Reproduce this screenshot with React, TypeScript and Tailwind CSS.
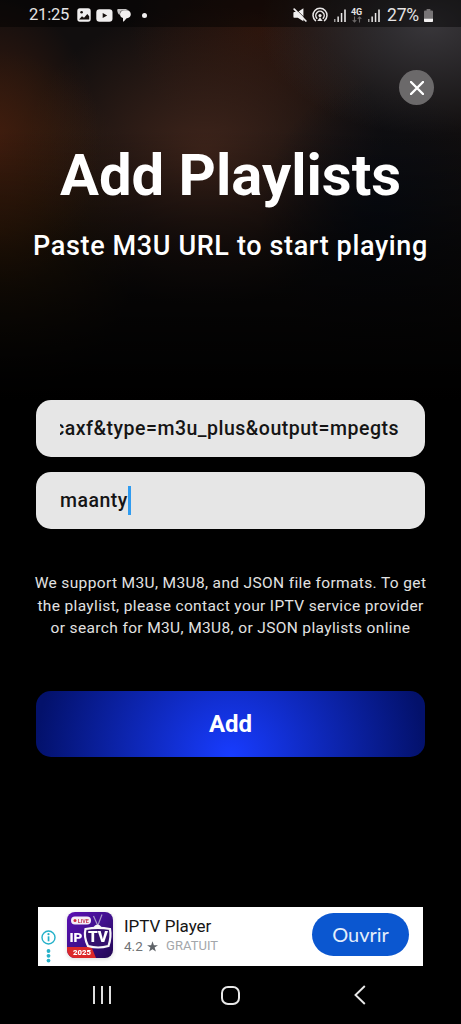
import type { ReactNode } from "react";

function SignalBars() {
  return (
    <svg viewBox="0 0 12 13" className="h-[13px] w-3" fill="#e8e6e6">
      <rect x="0" y="10" width="1.5" height="3" fill="#9a9898" />
      <rect x="3.4" y="7.5" width="1.5" height="5.5" />
      <rect x="6.8" y="4" width="1.5" height="9" />
      <rect x="10.2" y="0.5" width="1.6" height="12.5" />
    </svg>
  );
}

function StatusBar() {
  return (
    <div className="flex h-[27px] items-center bg-black/45 pl-[29px] pr-[28px] pt-[3px] text-[#e6e4e4]">
      <span className="w-[42px] whitespace-nowrap text-[16.5px] leading-6 tracking-[-0.2px]">21:25</span>
      <svg viewBox="0 0 14 14" className="ml-[6px] size-[14px]">
        <rect x="0.3" y="0.3" width="13.4" height="13.4" rx="2.6" fill="#f1efef" />
        <circle cx="4.6" cy="4.2" r="1.3" fill="#17100e" />
        <path d="M2 11.6 5 8.3 7 9.8 10.3 6 12.2 8.3V11.6Z" fill="#17100e" />
      </svg>
      <svg viewBox="0 0 17 13" className="ml-[5px] h-[13px] w-[17px]">
        <rect x="0.3" y="0.3" width="16.2" height="12.4" rx="3.2" fill="#f1efef" />
        <path d="M6.7 3.9 11.2 6.5 6.7 9.1Z" fill="#17100e" />
      </svg>
      <svg viewBox="0 0 14 14" className="ml-[4px] size-[14px]">
        <path d="M1.2 1H7.5C9.5 1 10.5 1.7 11 2.3H6.5C4.2 2.3 2.8 4 2.8 6V7C1.2 6 .5 4.5.2 2.2Q.1 1 1.2 1Z" fill="#c4c2c2" />
        <path d="M7 2.3H9.8C12.3 2.3 13.8 4 13.8 6.3S12.300 10.200 10 10.200H9.600L6.800 13.500Q6 13.800 6 12.900V10.100C4.200 9.600 3 8.200 3 6.300 3 4 4.800 2.300 7 2.300Z" fill="#f1efef" />
      </svg>
      <span className="ml-[11px] size-[5px] rounded-full bg-[#f1efef]" />

      <svg viewBox="0 0 14 14" className="ml-auto size-[14px]">
        <path d="M1.2 4.1H4.8L10.4.3V13.2L4.800 9.800H1.200Q.4 9.800.4 9V4.900Q.4 4.100 1.200 4.100Z" fill="#f1efef" />
        <path d="M2.500.8 13.700 12" stroke="#1a1210" strokeWidth="0.900" />
        <path d="M1.200 1.200 12.900 13" stroke="#f1efef" strokeWidth="1.700" strokeLinecap="round" />
      </svg>
      <svg viewBox="0 0 16 16" className="ml-[5px] size-[16px]" fill="none" stroke="#e8e6e6" strokeWidth="1.500" strokeLinecap="round">
        <path d="M3.500 13.600a7 7 0 1 1 9 0" />
        <path d="M4.800 11.200a4.200 4.200 0 1 1 6.400 0" />
        <circle cx="8" cy="8.600" r="1.600" fill="#e8e6e6" stroke="none" />
        <path d="M8 10.200 10.700 14H5.300Z" fill="#e8e6e6" stroke="none" />
      </svg>
      <div className="ml-[6px]">
        <SignalBars />
      </div>
      <div className="ml-[5px] flex w-[11px] flex-col items-center">
        <span className="text-[9px] font-bold leading-[8px] tracking-[-0.2px]">4G</span>
        <svg viewBox="0 0 10 7" className="h-[7px] w-[10px]" fill="none" stroke="#6d6969" strokeWidth="1.100">
          <path d="M2.500.5V6M.7 4.200 2.500 6l1.800-1.800M7.500 6.500V1M5.700 2.800 7.500 1l1.800 1.800" />
        </svg>
      </div>
      <div className="ml-[6px]">
        <SignalBars />
      </div>
      <span className="ml-[7px] w-[35px] whitespace-nowrap text-[17.5px] leading-6 tracking-[-0.2px]">27%</span>
      <svg viewBox="0 0 9 13" className="ml-[2px] h-[13px] w-[9px]">
        <path d="M2.600 0h3.800v1.500H8q1 0 1 1V12q0 1-1 1H1q-1 0-1-1V2.500q0-1 1-1h1.600Z" fill="#777476" />
        <path d="M0 9.800H9V12q0 1-1 1H1q-1 0-1-1Z" fill="#f4f2f2" />
      </svg>
    </div>
  );
}

function Field({ children }: { children: ReactNode }) {
  return (
    <div className="flex h-[57px] items-center rounded-[15px] bg-[#e6e6e6] px-6 text-[19.5px] font-medium tracking-[0.5px] text-[#151515]">
      {children}
    </div>
  );
}

function AppIcon() {
  return (
    <svg viewBox="0 0 46 46" className="size-[46px] drop-shadow-sm">
      <defs>
        <linearGradient id="purple" x1="0" y1="0" x2="1" y2="1">
          <stop offset="0" stopColor="#5b10b4" />
          <stop offset="0.5" stopColor="#40108e" />
          <stop offset="1" stopColor="#210650" />
        </linearGradient>
        <clipPath id="tile">
          <rect width="46" height="46" rx="8" />
        </clipPath>
      </defs>
      <g clipPath="url(#tile)">
        <rect width="46" height="46" fill="url(#purple)" />
        <path d="M0 35H24.500L29 46H0Z" fill="#dc2829" />
      </g>
      <rect x="4" y="4.500" width="20" height="8" rx="4" fill="#f5eef5" />
      <circle cx="8" cy="8.500" r="1.500" fill="#d52c3d" />
      <text x="10.800" y="10.700" fontSize="6" fontWeight="700" fill="#c7405a" textLength="11" lengthAdjust="spacingAndGlyphs">LIVE</text>
      <path d="M26.500 4 30.500 13M35 2.500 31 13" stroke="#a99ac9" strokeWidth="1.200" />
      <path d="M26 15.500Q30.500 9.500 35 15.500Z" fill="#f5f3f8" />
      <path d="M18.500 17Q31 14.800 43 17 44.500 25 41.500 34 31 37 21 34 16.500 25 18.500 17Z" fill="#35106e" stroke="#f8f6fa" strokeWidth="2.200" />
      <text x="2.500" y="30" fontSize="13" fontWeight="900" fill="#fff" textLength="13" lengthAdjust="spacingAndGlyphs">IP</text>
      <text x="21" y="30.200" fontSize="14" fontWeight="900" fill="#fff" textLength="20" lengthAdjust="spacingAndGlyphs">TV</text>
      <text x="6" y="43.200" fontSize="7.500" fontWeight="900" fill="#fff" textLength="18" lengthAdjust="spacingAndGlyphs">2025</text>
    </svg>
  );
}

function AdBanner() {
  return (
    <div className="ml-[38px] flex h-[59px] w-[385px] bg-white">
      <div className="flex w-[28px] flex-col items-center pr-[8px] pt-[23px]">
        <svg viewBox="0 0 15 34" className="h-[34px] w-[15px] shrink-0" fill="#25b1c9">
          <circle cx="7.500" cy="7.500" r="6.500" fill="none" stroke="#25b1c9" strokeWidth="1.400" />
          <rect x="6.700" y="6.300" width="1.700" height="5" />
          <circle cx="7.500" cy="4.200" r="1.100" />
          <circle cx="7.500" cy="21" r="1.900" />
          <circle cx="7.500" cy="25.800" r="1.900" />
          <circle cx="7.500" cy="30.600" r="1.900" />
        </svg>
      </div>
      <div className="ml-px pt-[5px]">
        <AppIcon />
      </div>
      <div className="ml-[11px] pt-[9px]">
        <div className="whitespace-nowrap text-[17px] leading-[20px] text-[#151515]">IPTV Player</div>
        <div className="mt-px flex items-center whitespace-nowrap text-[13.5px] leading-[18px] text-[#707376]">
          <span className="w-[18px]">4.2</span>
          <svg viewBox="0 0 24 24" className="ml-[5px] size-[11px]" fill="#5f6368">
            <path d="m12 18 7.400 5-2.800-8.600L24 9h-9L12 .5 9 9H0l7.400 5.400L4.600 23z" />
          </svg>
          <span className="ml-[8px] text-[13px] tracking-[0.05px] text-[#a3a6aa]">GRATUIT</span>
        </div>
      </div>
      <button className="ml-auto mr-[14px] mt-[6px] h-[43px] w-[97px] rounded-full bg-[#0b57d0] pb-[2px] font-['Lato',sans-serif] text-[20px] text-[#e4eefb]">
        Ouvrir
      </button>
    </div>
  );
}

export default function App() {
  return (
    <div className="h-[1024px] w-[461px] overflow-hidden bg-black font-['Roboto',sans-serif] text-white">
      <div className="flex h-full flex-col bg-[linear-gradient(to_bottom,transparent_0,transparent_130px,rgba(0,0,0,.55)_250px,#000_400px),radial-gradient(ellipse_170px_110px_at_430px_25px,#38363a,transparent),radial-gradient(ellipse_120px_140px_at_380px_220px,#080c14,transparent),radial-gradient(ellipse_110px_150px_at_-10px_145px,#421d0e,transparent),radial-gradient(ellipse_180px_150px_at_205px_155px,#40251b,transparent),radial-gradient(ellipse_130px_110px_at_260px_30px,#2a130b,transparent),radial-gradient(ellipse_140px_180px_at_0px_230px,#352008,transparent),linear-gradient(#110e0e,#110e0e)]">
        <StatusBar />
        <div className="flex justify-end pr-[27px] pt-[43px]">
          <button className="flex size-[35px] items-center justify-center rounded-full bg-[#6b696a]">
            <svg viewBox="0 0 14 14" className="size-[14px]" stroke="#fff" strokeWidth="2.400" strokeLinecap="round">
              <path d="M1 1 13 13M13 1 1 13" />
            </svg>
          </button>
        </div>

        <h1 className="mt-[36px] whitespace-nowrap text-center text-[58px] font-bold leading-[68px]">Add Playlists</h1>
        <p className="mt-[21px] whitespace-nowrap text-center text-[27px] font-medium leading-[32px] tracking-[0.63px]">
          Paste M3U URL to start playing
        </p>

        <div className="mt-[138px] flex flex-col gap-[15px] px-9">
          <Field>
            <div className="flex w-[339px] justify-end overflow-hidden whitespace-nowrap">caxf&amp;type=m3u_plus&amp;output=mpegts</div>
          </Field>
          <Field>
            <span>maanty</span>
            <span className="h-[29px] w-[3px] bg-[#2f9bf0]" />
          </Field>
        </div>

        <div className="mt-[43px] whitespace-nowrap text-center text-[15.5px] leading-[22.7px] tracking-[0.36px] text-[#e2e2e2]">
          <p>We support M3U, M3U8, and JSON file formats. To get</p>
          <p>the playlist, please contact your IPTV service provider</p>
          <p>or search for M3U, M3U8, or JSON playlists online</p>
        </div>

        <button className="mx-9 mt-[51px] h-[66px] shrink-0 rounded-[15px] bg-[radial-gradient(circle_at_50%_100%,#183cff_0,#03116b_195px)] text-[24px] font-bold">
          Add
        </button>

        <div className="mt-auto">
          <AdBanner />
          <div className="flex h-[58px] items-center">
            <div className="flex w-[204px] justify-center gap-[6px]">
              <span className="h-[18px] w-[2px] bg-[#dedede]" />
              <span className="h-[18px] w-[2px] bg-[#dedede]" />
              <span className="h-[18px] w-[2px] bg-[#dedede]" />
            </div>
            <div className="flex w-[53px] justify-center">
              <span className="size-[19px] rounded-[7px] border-2 border-[#e8e8e8]" />
            </div>
            <div className="flex flex-1 justify-center pl-[2px]">
              <svg viewBox="0 0 12 20" className="h-5 w-3" fill="none" stroke="#e8e8e8" strokeWidth="1.900">
                <path d="M10.800 1 1.500 10 10.800 19" />
              </svg>
            </div>
          </div>
        </div>
      </div>
    </div>
  );
}
